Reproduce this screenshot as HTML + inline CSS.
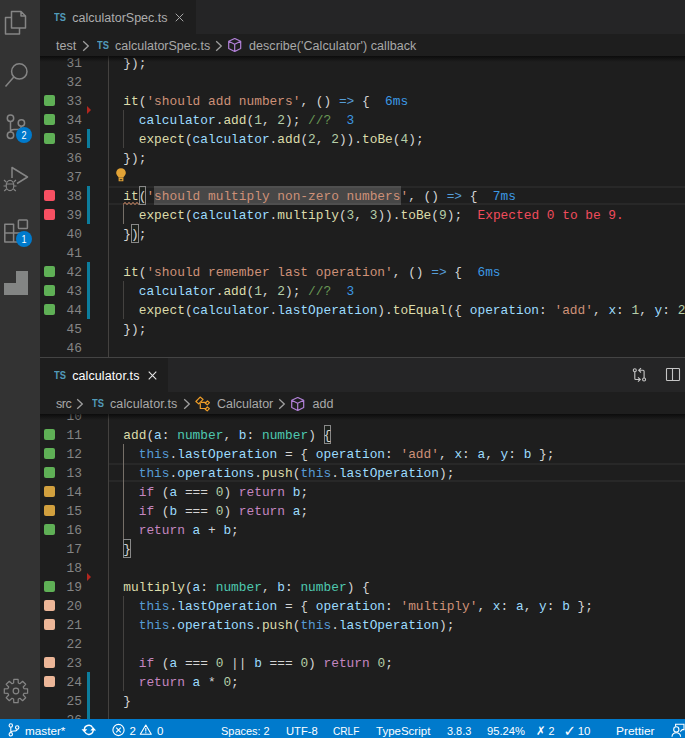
<!DOCTYPE html>
<html lang="en">
<head>
<meta charset="utf-8">
<title>calculator.ts - Visual Studio Code</title>
<style>
html,body{margin:0;padding:0}
body{width:685px;height:738px;overflow:hidden;background:#1e1e1e;position:relative;font-family:"Liberation Sans",sans-serif;font-size:13px;color:#cccccc}
.ab{position:absolute;display:block}
#act{position:absolute;left:0;top:0;width:40px;height:719px;background:#333333}
#act svg{position:absolute;left:0;top:0}
.badge{position:absolute;width:16px;height:16px;border-radius:8px;background:#007acc;color:#fff;font-size:10.5px;font-weight:normal;text-align:center;line-height:17px}
.badge span{display:inline-block;transform:scaleX(0.86)}
.tabs{position:absolute;left:40px;width:645px;background:#252526}
.tab{position:absolute;left:0;top:0;background:#1e1e1e}
.ts{position:absolute;color:#519aba;font-weight:bold;font-size:11px;transform:scaleX(0.85);transform-origin:left center;display:inline-block}
.tts{left:14px;top:11px;line-height:12px}
.bts{top:5px;line-height:12px}
.tl{position:absolute;top:1px;line-height:34px;color:#ffffff;font-size:12.5px;white-space:pre}
.tl.dim{color:#adadad}
.close{position:absolute;top:12px}
.bc{position:absolute;left:40px;width:645px;height:22px;background:#1e1e1e}
.bt{position:absolute;top:1px;line-height:22px;color:#a9a9a9;font-size:12.5px;white-space:pre}
.chev{display:block}
.bi{display:block}
.ed{position:absolute;left:40px;width:645px;overflow:hidden;background:#1e1e1e}
.ln{position:absolute;left:0;width:42px;text-align:right;height:19px;line-height:21px;color:#858585;font-family:"Liberation Mono",monospace;font-size:12.83px;white-space:pre}
.cl{position:absolute;left:67.9px;height:19px;line-height:21px;color:#d4d4d4;font-family:"Liberation Mono",monospace;font-size:12.83px;white-space:pre}
.sq{position:absolute;left:4px;width:11px;height:11px;border-radius:2px}
.mod{position:absolute;left:47px;width:3px;height:19px;background:#0c7d9d}
.del{position:absolute;left:47px;width:0;height:0;border-left:4px solid #b3261e;border-top:4px solid transparent;border-bottom:4px solid transparent}
.ig{position:absolute;width:1px;background:#444240;margin-left:-40px}
.iga{background:#766f68}
.clb{position:absolute;left:68px;width:577px;height:2px;background:#282828}
.selh{position:absolute;height:19px;background:rgba(255,255,255,0.185);margin-left:-40px}
.bm{position:absolute;box-sizing:border-box;width:7px;height:19px;border:1px solid #888888;background:rgba(0,100,0,0.04);margin-left:-40px}
.bulb{position:absolute;margin-left:-40px}
.sqg{position:absolute;margin-left:-40px}
.shadow{position:absolute;left:40px;width:645px;height:6px;background:linear-gradient(to bottom,rgba(0,0,0,0.6),rgba(0,0,0,0))}
.gborder{position:absolute;left:40px;width:645px;height:1px;background:#444444}
.d{color:#d4d4d4}.f{color:#dcdcaa}.v{color:#9cdcfe}.s{color:#ce9178}.n{color:#b5cea8}.c{color:#6a9955}.k{color:#569cd6}.p{color:#c586c0}.t{color:#4ec9b0}.w{color:#3c99e4}.e{color:#f14c5c}
#status{position:absolute;left:0;top:719px;width:685px;height:19px;background:#007acc;color:#ffffff;font-size:11.5px;overflow:hidden}
#status span{position:absolute;top:1px;line-height:22px;white-space:pre;transform-origin:left center;display:inline-block}
#status svg{position:absolute}

</style>
</head>
<body>
<div id="act">
<svg width="40" height="719" viewBox="0 0 40 719">
 <g fill="none" stroke="#858585" stroke-width="1.5" stroke-linejoin="round">
  <!-- explorer -->
  <path d="M11.5 11.5 H21 L25.5 16 V28 H11.5 Z M21 11.5 V16 H25.5"/>
  <path d="M11.5 17.5 H5.5 V34 H19.5 V28"/>
  <!-- search -->
  <circle cx="19.3" cy="71.4" r="7.7"/>
  <path d="M13.8 77 L5.5 86.5"/>
  <!-- source control -->
  <circle cx="10.5" cy="118.3" r="3.2"/>
  <circle cx="10.5" cy="135.3" r="3.2"/>
  <circle cx="21.4" cy="123" r="3.2"/>
  <path d="M10.5 121.5 V132 M21.4 126.2 Q21.4 129.5 17 129.5 H14 Q10.5 129.5 10.5 132"/>
  <!-- debug -->
  <path d="M12 178 V167.5 L27.5 177 L17 183.5"/>
 </g>
 <g fill="none" stroke="#858585" stroke-width="1.2">
  <ellipse cx="10" cy="185.5" rx="3.8" ry="5.2"/>
  <path d="M6.4 184 H13.6 M6.2 182 L4 180 M13.8 182 L16 180 M6 186 H3.5 M14 186 H16.5 M6.5 189 L4.2 191 M13.5 189 L15.8 191"/>
 </g>
 <g fill="none" stroke="#858585" stroke-width="1.5" stroke-linejoin="round">
  <!-- extensions -->
  <rect x="18.4" y="220" width="9" height="8.5" rx="0.8"/>
  <path d="M4.8 224.2 H13.6 V242 H4.8 Z M4.8 233 H23 V242 H13.6"/>
 </g>
 <!-- wallaby -->
 <path d="M16 271 H28 V295 H4 V283 H16 Z" fill="#838584"/>
 <!-- gear -->
 <g fill="none" stroke="#858585" stroke-width="1.2" stroke-linejoin="round">
  <path d="M13.6 683.0 L13.8 679.4 L18.1 679.4 L18.3 683.0 L19.9 683.7 L22.6 681.3 L25.7 684.3 L23.2 687.0 L23.9 688.6 L27.6 688.8 L27.6 693.2 L23.9 693.4 L23.2 695.0 L25.7 697.7 L22.6 700.7 L19.9 698.3 L18.3 699.0 L18.1 702.6 L13.8 702.6 L13.6 699.0 L12.0 698.3 L9.3 700.7 L6.2 697.7 L8.7 695.0 L8.0 693.4 L4.3 693.2 L4.3 688.8 L8.0 688.6 L8.7 687.0 L6.2 684.3 L9.3 681.3 L12.0 683.7 Z"/>
  <circle cx="15.95" cy="691" r="2.8"/>
 </g>
</svg>
<div class="badge" style="left:16px;top:127px"><span>2</span></div>
<div class="badge" style="left:16px;top:231px"><span>1</span></div>
</div>

<div class="tabs" style="top:0;height:34px">
  <div class="tab" style="width:156px;height:34px"><span class="ts tts">TS</span><span class="tl dim" style="left:32.3px">calculatorSpec.ts</span>
    <svg class="close" style="left:135.2px;top:13px" width="9" height="9" viewBox="0 0 10 10"><path d="M0.8 0.8 L9.2 9.2 M9.2 0.8 L0.8 9.2" stroke="#a8a8a8" stroke-width="1.1" fill="none"/></svg></div>
</div>
<div class="bc" style="top:34px">
  <span class="bt" style="left:16px">test</span><span style="left:41.5px;top:6px" class="ab"><svg class="chev" width="8" height="12" viewBox="0 0 8 12"><path d="M1.2 1.2 L6.3 6 L1.2 10.8" fill="none" stroke="#a0a0a0" stroke-width="1.3"/></svg></span>
  <span class="ts bts" style="left:57px">TS</span><span class="bt" style="left:75px">calculatorSpec.ts</span><span style="left:174.8px;top:6px" class="ab"><svg class="chev" width="8" height="12" viewBox="0 0 8 12"><path d="M1.2 1.2 L6.3 6 L1.2 10.8" fill="none" stroke="#a0a0a0" stroke-width="1.3"/></svg></span>
  <span class="ab" style="left:188.2px;top:4.2px"><svg class="bi" width="13.4" height="14" viewBox="0.8 0.5 13.4 14" preserveAspectRatio="none"><path d="M7.5 1 L13.5 3.8 V11 L7.5 14 L1.5 11 V3.8 Z M1.5 3.8 L7.5 6.8 L13.5 3.8 M7.5 6.8 V14" fill="none" stroke="#b180d7" stroke-width="1.2" stroke-linejoin="round"/></svg></span><span class="bt" style="left:209px;letter-spacing:0.07px">describe('Calculator') callback</span>
</div>
<div class="ed" style="top:56px;height:301px">
<div class="clb" style="top:130px"></div>
<div class="clb" style="top:147px"></div>
<div class="ig" style="left:108px;top:0px;height:301px"></div>
<div class="ig" style="left:123px;top:54px;height:38px"></div>
<div class="ig iga" style="left:123px;top:149px;height:19px"></div>
<div class="ig" style="left:123px;top:225px;height:38px"></div>
<div class="selh" style="left:154px;top:130px;width:247px"></div>
<div class="bm" style="left:139px;top:130px"></div>
<div class="bm" style="left:131px;width:8px;top:168px"></div>
<div class="del" style="top:50px"></div>
<svg class="bulb" style="left:114.8px;top:112px" width="12" height="13.6" viewBox="0 0 12 14" preserveAspectRatio="none"><path d="M6 0.3C3.2 0.3 1.2 2.4 1.2 5c0 1.7 0.9 2.8 1.8 3.7 0.4 0.4 0.6 0.9 0.6 1.4h4.8c0-0.5 0.2-1 0.6-1.4C9.9 7.8 10.8 6.7 10.8 5 10.8 2.4 8.8 0.3 6 0.3z" fill="#e2a336"/><path d="M4.2 10.9h3.6v2.2H4.2z" fill="none" stroke="#e2a336" stroke-width="1.2"/></svg>
<svg class="sqg" style="left:123px;top:145px" width="17" height="5" viewBox="0 0.5 17 5"><path d="M0 4 C1 4 1 2 2 2 S3 4 4 4 S5 2 6 2 S7 4 8 4 S9 2 10 2 S11 4 12 4 S13 2 14 2 S15 4 16 4" fill="none" stroke="#e0966e" stroke-width="1"/></svg>
<div class="ln" style="top:-3px">31</div>
<div class="cl" style="top:-3px"><span class="d">  });</span></div>
<div class="ln" style="top:16px">32</div>
<div class="ln" style="top:35px">33</div>
<div class="sq" style="top:39px;background:#5fb056"></div>
<div class="cl" style="top:35px"><span class="d">  </span><span class="f">it</span><span class="d">(</span><span class="s">'should add numbers'</span><span class="d">, () </span><span class="k">=&gt;</span><span class="d"> {</span><span class="w">  6ms</span></div>
<div class="ln" style="top:54px">34</div>
<div class="sq" style="top:58px;background:#5fb056"></div>
<div class="cl" style="top:54px"><span class="d">    </span><span class="v">calculator</span><span class="d">.</span><span class="f">add</span><span class="d">(</span><span class="n">1</span><span class="d">, </span><span class="n">2</span><span class="d">); </span><span class="c">//?</span><span class="w">  3</span></div>
<div class="ln" style="top:73px">35</div>
<div class="sq" style="top:77px;background:#5fb056"></div>
<div class="mod" style="top:73px"></div>
<div class="cl" style="top:73px"><span class="d">    </span><span class="f">expect</span><span class="d">(</span><span class="v">calculator</span><span class="d">.</span><span class="f">add</span><span class="d">(</span><span class="n">2</span><span class="d">, </span><span class="n">2</span><span class="d">)).</span><span class="f">toBe</span><span class="d">(</span><span class="n">4</span><span class="d">);</span></div>
<div class="ln" style="top:92px">36</div>
<div class="cl" style="top:92px"><span class="d">  });</span></div>
<div class="ln" style="top:111px">37</div>
<div class="ln" style="top:130px">38</div>
<div class="sq" style="top:134px;background:#f75062"></div>
<div class="mod" style="top:130px"></div>
<div class="cl" style="top:130px"><span class="d">  </span><span class="f">it</span><span class="d">(</span><span class="s">'should multiply non-zero numbers'</span><span class="d">, () </span><span class="k">=&gt;</span><span class="d"> {</span><span class="w">  7ms</span></div>
<div class="ln" style="top:149px">39</div>
<div class="sq" style="top:153px;background:#f75062"></div>
<div class="mod" style="top:149px"></div>
<div class="cl" style="top:149px"><span class="d">    </span><span class="f">expect</span><span class="d">(</span><span class="v">calculator</span><span class="d">.</span><span class="f">multiply</span><span class="d">(</span><span class="n">3</span><span class="d">, </span><span class="n">3</span><span class="d">)).</span><span class="f">toBe</span><span class="d">(</span><span class="n">9</span><span class="d">);</span><span class="e">  Expected 0 to be 9.</span></div>
<div class="ln" style="top:168px">40</div>
<div class="cl" style="top:168px"><span class="d">  });</span></div>
<div class="ln" style="top:187px">41</div>
<div class="ln" style="top:206px">42</div>
<div class="sq" style="top:210px;background:#5fb056"></div>
<div class="mod" style="top:206px"></div>
<div class="cl" style="top:206px"><span class="d">  </span><span class="f">it</span><span class="d">(</span><span class="s">'should remember last operation'</span><span class="d">, () </span><span class="k">=&gt;</span><span class="d"> {</span><span class="w">  6ms</span></div>
<div class="ln" style="top:225px">43</div>
<div class="sq" style="top:229px;background:#5fb056"></div>
<div class="mod" style="top:225px"></div>
<div class="cl" style="top:225px"><span class="d">    </span><span class="v">calculator</span><span class="d">.</span><span class="f">add</span><span class="d">(</span><span class="n">1</span><span class="d">, </span><span class="n">2</span><span class="d">); </span><span class="c">//?</span><span class="w">  3</span></div>
<div class="ln" style="top:244px">44</div>
<div class="sq" style="top:248px;background:#5fb056"></div>
<div class="mod" style="top:244px"></div>
<div class="cl" style="top:244px"><span class="d">    </span><span class="f">expect</span><span class="d">(</span><span class="v">calculator</span><span class="d">.</span><span class="v">lastOperation</span><span class="d">).</span><span class="f">toEqual</span><span class="d">({ </span><span class="v">operation</span><span class="d">: </span><span class="s">'add'</span><span class="d">, </span><span class="v">x</span><span class="d">: </span><span class="n">1</span><span class="d">, </span><span class="v">y</span><span class="d">: </span><span class="n">2</span><span class="d"> });</span></div>
<div class="ln" style="top:263px">45</div>
<div class="cl" style="top:263px"><span class="d">  });</span></div>
<div class="ln" style="top:282px">46</div>
</div>
<div class="shadow" style="top:56px"></div>
<div class="gborder" style="top:357px"></div>
<div class="tabs" style="top:358px;height:34px">
  <div class="tab" style="width:128px;height:34px"><span class="ts tts">TS</span><span class="tl" style="left:32.2px;letter-spacing:0.1px">calculator.ts</span>
    <svg class="close" style="left:107.8px;top:13px" width="9" height="9" viewBox="0 0 10 10"><path d="M0.8 0.8 L9.2 9.2 M9.2 0.8 L0.8 9.2" stroke="#e8e8e8" stroke-width="1.2" fill="none"/></svg></div>
  <svg class="ab" style="left:591px;top:9px" width="16" height="16" viewBox="0 0 16 16"><g fill="none" stroke="#c5c5c5" stroke-width="1.1"><circle cx="3.8" cy="3.3" r="1.5"/><circle cx="13.1" cy="12.5" r="1.5"/><path d="M3.8 4.8 V11.5 Q3.8 12.5 4.8 12.5 H9 M7 10.3 L9.3 12.5 L7 14.7"/><path d="M13.1 11 V4.3 Q13.1 3.3 12.1 3.3 H7.9 M10 1.1 L7.7 3.3 L10 5.5"/></g></svg>
  <svg class="ab" style="left:625px;top:9px" width="16" height="16" viewBox="0 0 16 16"><g fill="none" stroke="#c5c5c5" stroke-width="1.1"><rect x="1.5" y="1.5" width="13" height="12" rx="0.8"/><path d="M7.5 1.5 V13.5"/></g></svg>
</div>
<div class="bc" style="top:392px">
  <span class="bt" style="left:16px;letter-spacing:-0.4px">src</span><span style="left:36px;top:6px" class="ab"><svg class="chev" width="8" height="12" viewBox="0 0 8 12"><path d="M1.2 1.2 L6.3 6 L1.2 10.8" fill="none" stroke="#a0a0a0" stroke-width="1.3"/></svg></span>
  <span class="ts bts" style="left:52px">TS</span><span class="bt" style="left:70px;letter-spacing:0.1px">calculator.ts</span><span style="left:143px;top:6px" class="ab"><svg class="chev" width="8" height="12" viewBox="0 0 8 12"><path d="M1.2 1.2 L6.3 6 L1.2 10.8" fill="none" stroke="#a0a0a0" stroke-width="1.3"/></svg></span>
  <span class="ab" style="left:154.5px;top:3.5px"><svg class="bi" width="17" height="16" viewBox="194.5 395 17 16"><path d="M199.6 396.1 L202.6 398.4 L198.2 402.9 L195.4 400.5 Z M200.5 401.3 H205 M199.8 402.2 V407.5 H205 M204.8 402.2 L207 400 L209 401.6 L206.8 403.8 Z M204.7 408.2 L206.9 406 L208.9 407.6 L206.7 409.8 Z" fill="none" stroke="#ee9d28" stroke-width="1.2" stroke-linejoin="round"/></svg></span><span class="bt" style="left:177px">Calculator</span><span style="left:238.3px;top:6px" class="ab"><svg class="chev" width="8" height="12" viewBox="0 0 8 12"><path d="M1.2 1.2 L6.3 6 L1.2 10.8" fill="none" stroke="#a0a0a0" stroke-width="1.3"/></svg></span>
  <span class="ab" style="left:251.4px;top:4.6px"><svg class="bi" width="13.4" height="14" viewBox="0.8 0.5 13.4 14" preserveAspectRatio="none"><path d="M7.5 1 L13.5 3.8 V11 L7.5 14 L1.5 11 V3.8 Z M1.5 3.8 L7.5 6.8 L13.5 3.8 M7.5 6.8 V14" fill="none" stroke="#b180d7" stroke-width="1.2" stroke-linejoin="round"/></svg></span><span class="bt" style="left:272.5px">add</span>
</div>
<div class="ed" style="top:414px;height:305px">
<div class="clb" style="top:49px"></div>
<div class="clb" style="top:66px"></div>
<div class="ig" style="left:108px;top:0px;height:305px"></div>
<div class="ig iga" style="left:123px;top:30px;height:95px"></div>
<div class="ig" style="left:123px;top:182px;height:95px"></div>
<div class="bm" style="left:324px;top:11px"></div>
<div class="bm" style="left:123px;width:8px;top:125px"></div>
<div class="del" style="top:159px"></div>
<div class="ln" style="top:-8px">10</div>
<div class="ln" style="top:11px">11</div>
<div class="sq" style="top:15px;background:#5fb056"></div>
<div class="cl" style="top:11px"><span class="d">  </span><span class="f">add</span><span class="d">(</span><span class="v">a</span><span class="d">: </span><span class="t">number</span><span class="d">, </span><span class="v">b</span><span class="d">: </span><span class="t">number</span><span class="d">) {</span></div>
<div class="ln" style="top:30px">12</div>
<div class="sq" style="top:34px;background:#5fb056"></div>
<div class="cl" style="top:30px"><span class="d">    </span><span class="k">this</span><span class="d">.</span><span class="v">lastOperation</span><span class="d"> = { </span><span class="v">operation</span><span class="d">: </span><span class="s">'add'</span><span class="d">, </span><span class="v">x</span><span class="d">: </span><span class="v">a</span><span class="d">, </span><span class="v">y</span><span class="d">: </span><span class="v">b</span><span class="d"> };</span></div>
<div class="ln" style="top:49px">13</div>
<div class="sq" style="top:53px;background:#5fb056"></div>
<div class="cl" style="top:49px"><span class="d">    </span><span class="k">this</span><span class="d">.</span><span class="v">operations</span><span class="d">.</span><span class="f">push</span><span class="d">(</span><span class="k">this</span><span class="d">.</span><span class="v">lastOperation</span><span class="d">);</span></div>
<div class="ln" style="top:68px">14</div>
<div class="sq" style="top:72px;background:#d2a03e"></div>
<div class="cl" style="top:68px"><span class="d">    </span><span class="p">if</span><span class="d"> (</span><span class="v">a</span><span class="d"> === </span><span class="n">0</span><span class="d">) </span><span class="p">return</span><span class="d"> </span><span class="v">b</span><span class="d">;</span></div>
<div class="ln" style="top:87px">15</div>
<div class="sq" style="top:91px;background:#d2a03e"></div>
<div class="cl" style="top:87px"><span class="d">    </span><span class="p">if</span><span class="d"> (</span><span class="v">b</span><span class="d"> === </span><span class="n">0</span><span class="d">) </span><span class="p">return</span><span class="d"> </span><span class="v">a</span><span class="d">;</span></div>
<div class="ln" style="top:106px">16</div>
<div class="sq" style="top:110px;background:#5fb056"></div>
<div class="cl" style="top:106px"><span class="d">    </span><span class="p">return</span><span class="d"> </span><span class="v">a</span><span class="d"> + </span><span class="v">b</span><span class="d">;</span></div>
<div class="ln" style="top:125px">17</div>
<div class="cl" style="top:125px"><span class="d">  }</span></div>
<div class="ln" style="top:144px">18</div>
<div class="ln" style="top:163px">19</div>
<div class="sq" style="top:167px;background:#5fb056"></div>
<div class="cl" style="top:163px"><span class="d">  </span><span class="f">multiply</span><span class="d">(</span><span class="v">a</span><span class="d">: </span><span class="t">number</span><span class="d">, </span><span class="v">b</span><span class="d">: </span><span class="t">number</span><span class="d">) {</span></div>
<div class="ln" style="top:182px">20</div>
<div class="sq" style="top:186px;background:#ecb698"></div>
<div class="cl" style="top:182px"><span class="d">    </span><span class="k">this</span><span class="d">.</span><span class="v">lastOperation</span><span class="d"> = { </span><span class="v">operation</span><span class="d">: </span><span class="s">'multiply'</span><span class="d">, </span><span class="v">x</span><span class="d">: </span><span class="v">a</span><span class="d">, </span><span class="v">y</span><span class="d">: </span><span class="v">b</span><span class="d"> };</span></div>
<div class="ln" style="top:201px">21</div>
<div class="sq" style="top:205px;background:#ecb698"></div>
<div class="cl" style="top:201px"><span class="d">    </span><span class="k">this</span><span class="d">.</span><span class="v">operations</span><span class="d">.</span><span class="f">push</span><span class="d">(</span><span class="k">this</span><span class="d">.</span><span class="v">lastOperation</span><span class="d">);</span></div>
<div class="ln" style="top:220px">22</div>
<div class="ln" style="top:239px">23</div>
<div class="sq" style="top:243px;background:#ecb698"></div>
<div class="cl" style="top:239px"><span class="d">    </span><span class="p">if</span><span class="d"> (</span><span class="v">a</span><span class="d"> === </span><span class="n">0</span><span class="d"> || </span><span class="v">b</span><span class="d"> === </span><span class="n">0</span><span class="d">) </span><span class="p">return</span><span class="d"> </span><span class="n">0</span><span class="d">;</span></div>
<div class="ln" style="top:258px">24</div>
<div class="sq" style="top:262px;background:#ecb698"></div>
<div class="mod" style="top:258px"></div>
<div class="cl" style="top:258px"><span class="d">    </span><span class="p">return</span><span class="d"> </span><span class="v">a</span><span class="d"> * </span><span class="n">0</span><span class="d">;</span></div>
<div class="ln" style="top:277px">25</div>
<div class="mod" style="top:277px"></div>
<div class="cl" style="top:277px"><span class="d">  }</span></div>
<div class="ln" style="top:296px">26</div>
<div class="mod" style="top:296px"></div>
</div>
<div class="shadow" style="top:414px"></div>
<div id="status">
 <svg style="left:8px;top:4px" width="12" height="14" viewBox="0 0 12 14"><g fill="none" stroke="#fff" stroke-width="1.1"><circle cx="2.8" cy="2.5" r="1.7"/><circle cx="2.8" cy="11.3" r="1.7"/><circle cx="9.2" cy="4.5" r="1.7"/><path d="M2.8 4.2 V9.6 M9.2 6.2 Q9.2 8 6 8 Q2.8 8 2.8 9.6"/></g></svg>
 <span style="left:24.5px;transform:scaleX(1.02)">master*</span>
 <svg style="left:80px;top:3px" width="18" height="16" viewBox="80 722 18 16"><g fill="none" stroke="#fff" stroke-width="1.4"><path d="M84.4 730 A4.4 4.4 0 0 1 92.7 727.7 M93.2 729.8 A4.4 4.4 0 0 1 84.9 732"/></g><path d="M81.5 729.3 H87.3 L84.4 732.6 Z M90.3 730.5 H96.1 L93.2 727.2 Z" fill="#fff"/></svg>
 <svg style="left:111px;top:3px" width="16" height="16" viewBox="111 722 16 16"><g fill="none" stroke="#fff" stroke-width="1.1"><circle cx="118.5" cy="730" r="5.6"/><path d="M116.2 727.7 L120.8 732.3 M120.8 727.7 L116.2 732.3"/></g></svg>
 <span style="left:129.5px">2</span>
 <svg style="left:138px;top:3px" width="16" height="16" viewBox="138 722 16 16"><g fill="none" stroke="#fff" stroke-width="1.1" stroke-linejoin="round"><path d="M145.8 725 L151.3 734.3 H140.3 Z"/><path d="M145.8 728 V731.4 M145.8 732.3 V733.3"/></g></svg>
 <span style="left:157px">0</span>
 <span style="left:220.5px;transform:scaleX(0.952)">Spaces: 2</span>
 <span style="left:286px;transform:scaleX(0.975)">UTF-8</span>
 <span style="left:333.3px;transform:scaleX(0.88)">CRLF</span>
 <span style="left:376px">TypeScript</span>
 <span style="left:446.5px;transform:scaleX(0.95)">3.8.3</span>
 <span style="left:486.8px;transform:scaleX(0.974)">95.24%</span>
 <span style="left:535.8px;transform:scaleX(0.94)">&#x2717; 2</span>
 <span style="left:563.5px"><b style="font-family:'DejaVu Sans',sans-serif;font-size:15px;line-height:10px;display:inline-block;width:11px;vertical-align:-1px">&#x2713;</b> 10</span>
 <span style="left:616.3px;transform:scaleX(1.04)">Prettier</span>
 <svg style="left:669px;top:3px" width="16" height="16" viewBox="669 722 16 16"><g fill="none" stroke="#fff" stroke-width="1.1"><circle cx="676.3" cy="729.4" r="2.6"/><path d="M672 736.8 Q672.2 732.7 676.3 732.7 Q680.4 732.7 680.6 736.8"/><path d="M675.6 726.4 V724.3 H684 V729.6 H682.2 L680.3 731.6"/></g></svg>
</div>

</body>
</html>
